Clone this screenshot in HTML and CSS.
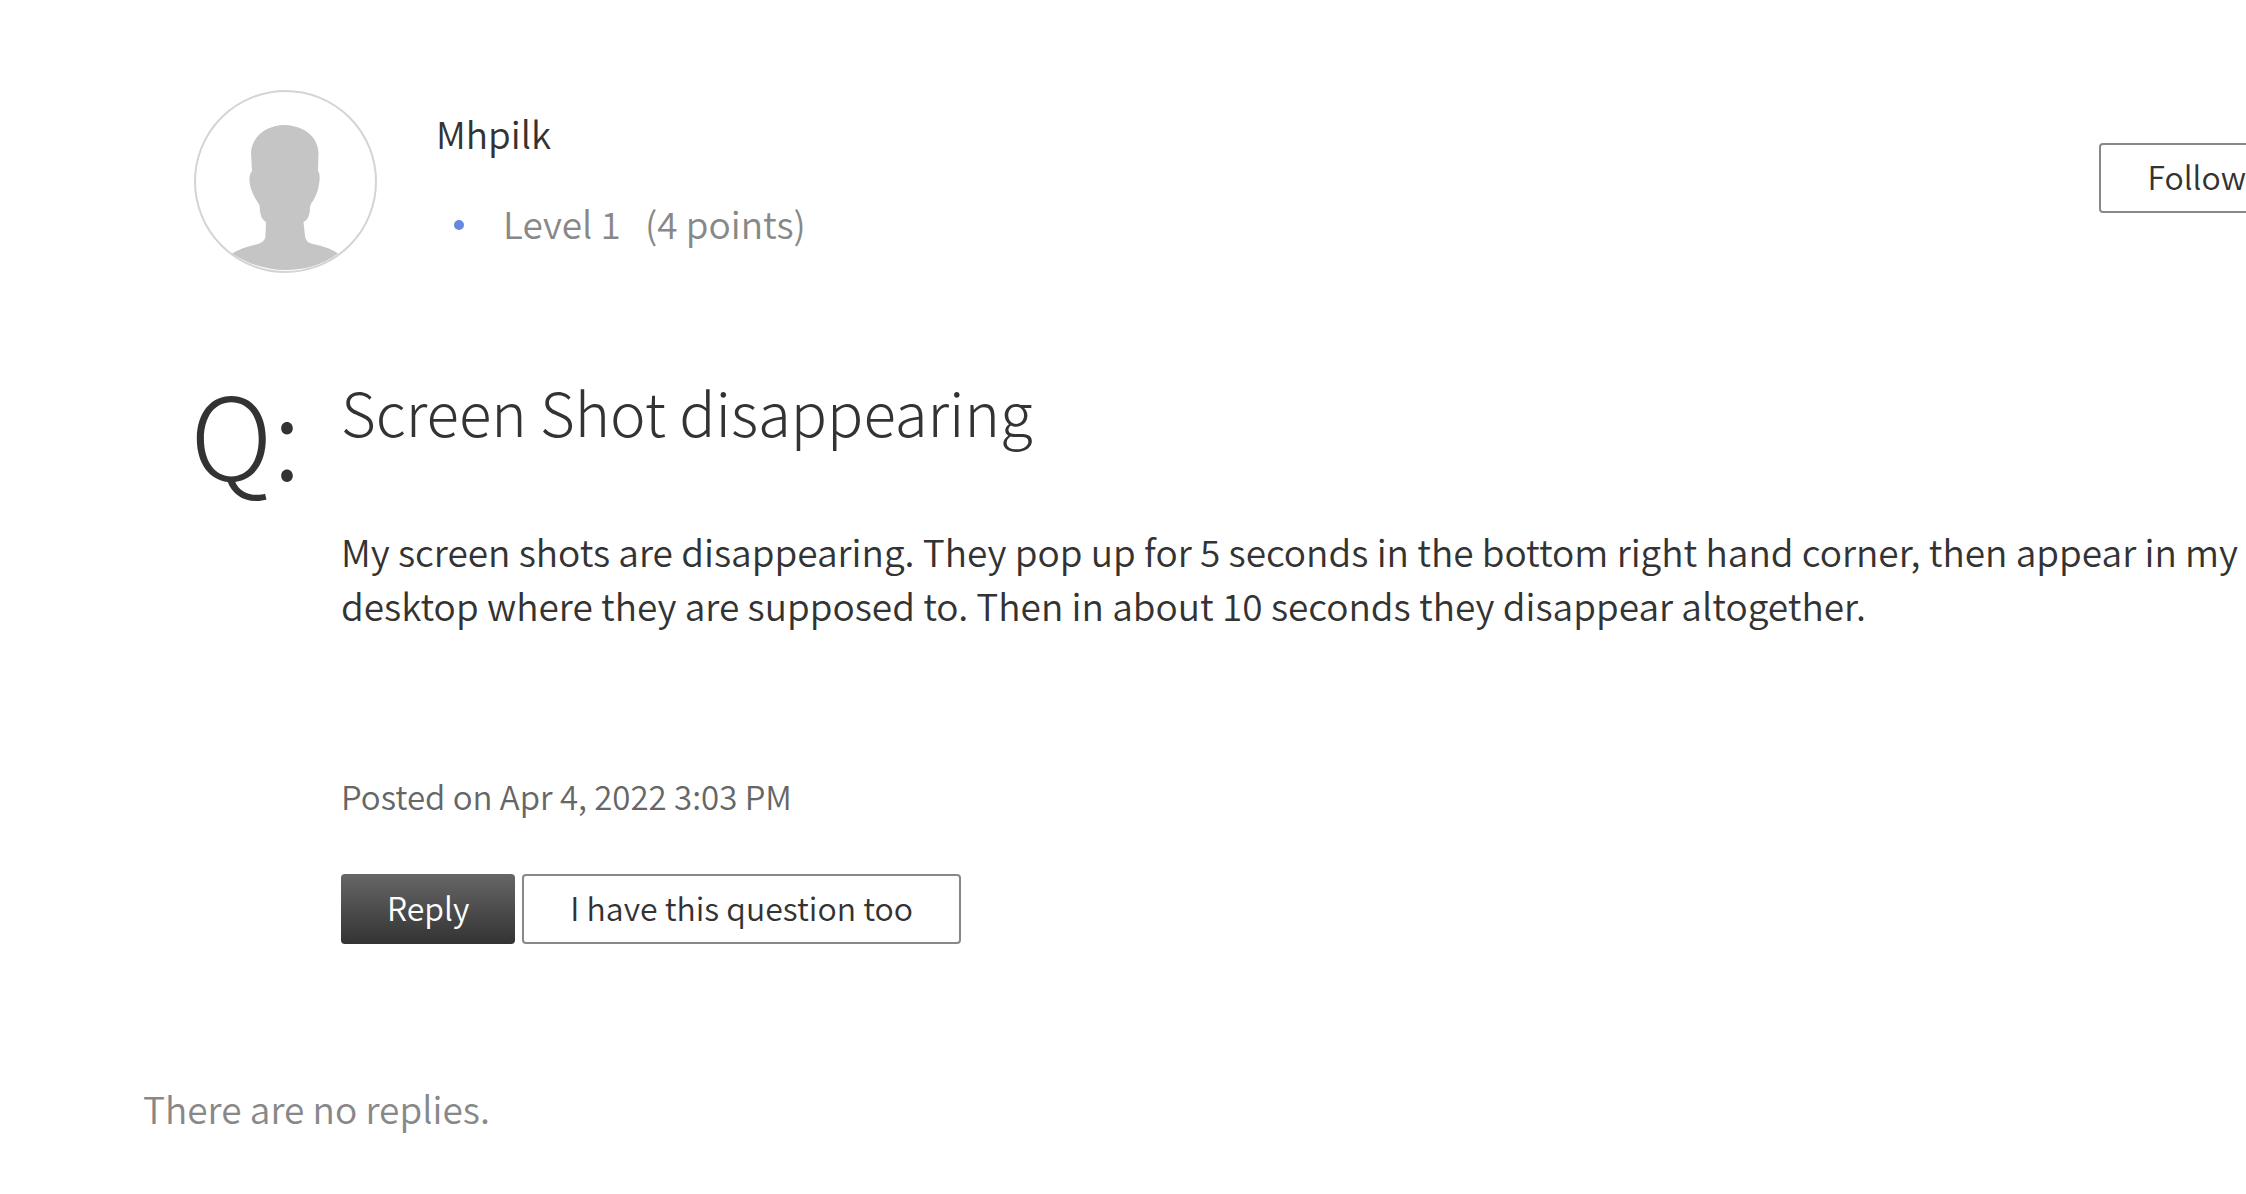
FILE: index.html
```
<!DOCTYPE html>
<html lang="en">
<head>
<meta charset="utf-8">
<title>Screen Shot disappearing</title>
<link rel="stylesheet" href="styles.css">
</head>
<body>
<main class="thread">
  <article class="post">
    <header class="author">
      <svg class="avatar" viewBox="0 0 184 184" aria-hidden="true">
        <circle cx="91.500" cy="91.500" r="90.500" fill="#fff" stroke="#d4d4d4" stroke-width="2"/>
        <path fill="#c5c5c5" d="M91 35C112 36 124 48 124.500 63L124 81C126 83 126 89 125 94C124 102 121 108 117 114L116 117C116 125 114 130 109.500 132L111 146C112 151 114 153 119 154C128 156 136 158 144 163.500C128 175 111 180 92 180C72 180 54 174 38 163.500C45 159 54 156 64 154C69 152 71 150 71.500 146L72 132C67 129 66 124 65.500 115C60 107 56 99 55.500 91C55 87 56 84 58 81L57 62C58 47 72 35 91 35Z"/>
      </svg>
      <div class="identity">
        <p class="name">Mhpilk</p>
        <p class="rank"><span class="dot"></span><span>Level 1</span><span class="points">(4 points)</span></p>
      </div>
      <button class="button follow" type="button">Follow</button>
    </header>
    <div class="question">
      <span class="mark">Q:</span>
      <div class="content">
        <h1 class="title">Screen Shot disappearing</h1>
        <p class="message">My screen shots are disappearing. They pop up for 5 seconds in the bottom right hand corner, then appear in my desktop where they are supposed to. Then in about 10 seconds they disappear altogether.</p>
        <p class="posted">Posted on Apr 4, 2022 3:03 PM</p>
        <div class="actions">
          <button class="button primary" type="button">Reply</button>
          <button class="button" type="button">I have this question too</button>
        </div>
      </div>
    </div>
  </article>
  <p class="empty">There are no replies.</p>
</main>
</body>
</html>
```
FILE: styles.css
```
* { box-sizing: border-box; }

body {
  margin: 0;
  overflow-x: hidden;
  background: #fff;
  color: #333;
  font-family: "Noto Sans CJK JP", "Open Sans", sans-serif;
  font-size: 37px;
  font-weight: 350;
  line-height: 54px;
}

p, h1 { margin: 0; }

.thread { padding: 90px 0 42px 143px; }

/* The post column runs past the right edge of the window. */
.post { margin-right: -48px; padding-left: 51px; }

.author { display: flex; align-items: flex-start; }

.avatar { width: 184px; height: 184px; flex: none; }

.identity { flex: 1; padding: 16px 0 0 58px; }

.rank {
  display: flex;
  align-items: center;
  margin-top: 36px;
  padding-left: 18px;
  color: #888;
}

.dot {
  width: 10px;
  height: 10px;
  margin: 4px 39px 0 0;
  border-radius: 50%;
  background: #6688e0;
}

.points { margin-left: 24px; }

.button {
  height: 70px;
  padding: 0 46px 4px;
  border: 2px solid #888;
  border-radius: 4px;
  background: #fff;
  color: #333;
  font: inherit;
  font-size: 32px;
}

.primary {
  border: 0;
  background: linear-gradient(#666, #333);
  color: #fff;
}

.follow { margin-top: 53px; }

.question { display: flex; margin-left: -4px; padding-top: 95px; }

.mark {
  flex: none;
  width: 151px;
  font-size: 114px;
  font-weight: 300;
  line-height: 126px;
}

.title {
  font-size: 60px;
  font-weight: 200;
  line-height: 84px;
}

.message { margin-top: 71px; }

.posted {
  margin-top: 137px;
  color: #666;
  font-size: 33px;
}

.actions { display: flex; gap: 7px; margin-top: 51px; }

.empty { margin-top: 137px; color: #888; }
```
